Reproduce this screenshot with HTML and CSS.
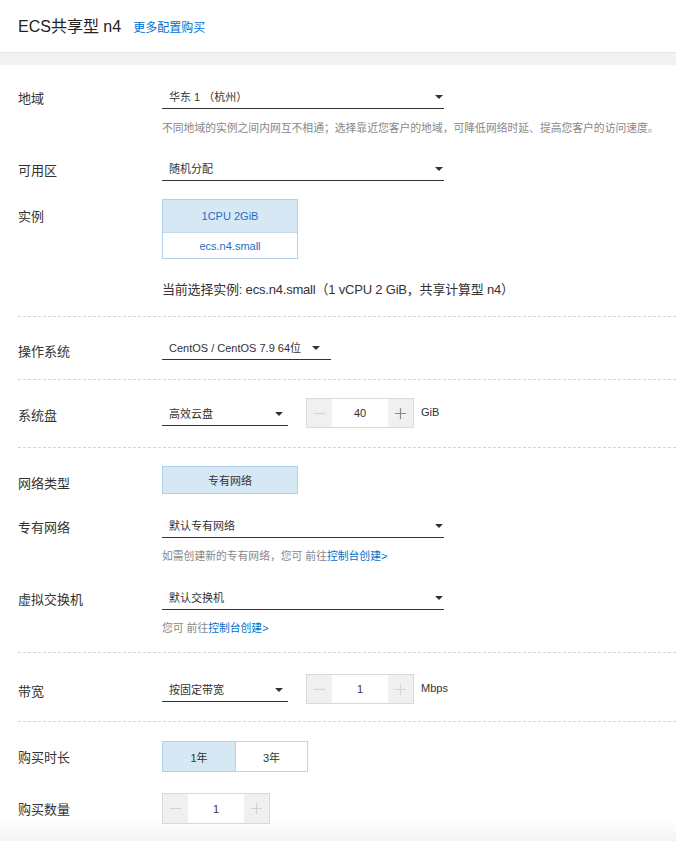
FILE: index.html
```html
<!DOCTYPE html>
<html lang="zh-CN">
<head>
<meta charset="utf-8">
<title>ECS共享型 n4</title>
<link rel="stylesheet" href="styles.css">
</head>
<body>
<header class="topbar">
  <h1 class="title">ECS共享型 n4</h1>
  <a class="more" href="#">更多配置购买</a>
</header>
<div class="band"></div>
<main class="form">
  <section class="group g1">
    <div class="field">
      <div class="label">地域</div>
      <div class="control">
        <div class="select wide"><span>华东 1 （杭州）</span><i class="caret"></i></div>
        <p class="hint h-first">不同地域的实例之间内网互不相通；选择靠近您客户的地域，可降低网络时延、提高您客户的访问速度。</p>
      </div>
    </div>
    <div class="field f-zone">
      <div class="label">可用区</div>
      <div class="control">
        <div class="select wide"><span>随机分配</span><i class="caret"></i></div>
      </div>
    </div>
    <div class="field f-inst">
      <div class="label">实例</div>
      <div class="control">
        <div class="card">
          <div class="card-spec">1CPU 2GiB</div>
          <div class="card-name">ecs.n4.small</div>
        </div>
        <p class="current">当前选择实例: ecs.n4.small（1 vCPU 2 GiB，共享计算型 n4）</p>
      </div>
    </div>
  </section>

  <section class="group g2">
    <div class="field">
      <div class="label label-os">操作系统</div>
      <div class="control">
        <div class="select os"><span>CentOS / CentOS 7.9 64位</span><i class="caret"></i></div>
      </div>
    </div>
  </section>

  <section class="group g3">
    <div class="field">
      <div class="label">系统盘</div>
      <div class="control inline">
        <div class="select narrow"><span>高效云盘</span><i class="caret"></i></div>
        <div class="stepper">
          <span class="step"><svg width="11" height="11" viewBox="0 0 11 11"><path d="M0 5.5H11" stroke="#d4d4d4" stroke-width="1.2"/></svg></span>
          <span class="val">40</span>
          <span class="step"><svg width="11" height="11" viewBox="0 0 11 11"><path d="M0 5.5H11M5.5 0V11" stroke="#8c8c8c" stroke-width="1.2"/></svg></span>
        </div>
        <span class="unit">GiB</span>
      </div>
    </div>
  </section>

  <section class="group g4">
    <div class="field">
      <div class="label">网络类型</div>
      <div class="control">
        <div class="chip">专有网络</div>
      </div>
    </div>
    <div class="field f-vpc">
      <div class="label">专有网络</div>
      <div class="control">
        <div class="select wide"><span>默认专有网络</span><i class="caret"></i></div>
        <p class="hint">如需创建新的专有网络，您可 前往<a href="#">控制台创建&gt;</a></p>
      </div>
    </div>
    <div class="field f-vsw">
      <div class="label">虚拟交换机</div>
      <div class="control">
        <div class="select wide"><span>默认交换机</span><i class="caret"></i></div>
        <p class="hint">您可 前往<a href="#">控制台创建&gt;</a></p>
      </div>
    </div>
  </section>

  <section class="group g5">
    <div class="field">
      <div class="label">带宽</div>
      <div class="control inline">
        <div class="select narrow"><span>按固定带宽</span><i class="caret"></i></div>
        <div class="stepper">
          <span class="step"><svg width="11" height="11" viewBox="0 0 11 11"><path d="M0 5.5H11" stroke="#d4d4d4" stroke-width="1.2"/></svg></span>
          <span class="val">1</span>
          <span class="step"><svg width="11" height="11" viewBox="0 0 11 11"><path d="M0 5.5H11M5.5 0V11" stroke="#d4d4d4" stroke-width="1.2"/></svg></span>
        </div>
        <span class="unit">Mbps</span>
      </div>
    </div>
  </section>

  <section class="group g6">
    <div class="field">
      <div class="label label-buy">购买时长</div>
      <div class="control">
        <div class="seg">
          <span class="seg-item active">1年</span>
          <span class="seg-item">3年</span>
        </div>
      </div>
    </div>
    <div class="field f-qty">
      <div class="label label-buy">购买数量</div>
      <div class="control">
        <div class="stepper qty">
          <span class="step"><svg width="11" height="11" viewBox="0 0 11 11"><path d="M0 5.5H11" stroke="#d4d4d4" stroke-width="1.2"/></svg></span>
          <span class="val">1</span>
          <span class="step"><svg width="11" height="11" viewBox="0 0 11 11"><path d="M0 5.5H11M5.5 0V11" stroke="#d4d4d4" stroke-width="1.2"/></svg></span>
        </div>
      </div>
    </div>
  </section>
</main>
</body>
</html>
```

FILE: styles.css
```css
* { box-sizing: border-box; }

html, body {
  margin: 0;
  padding: 0;
  background: #fff;
}

body {
  font-family: "Liberation Sans", Arial, "Noto Sans CJK SC", sans-serif;
  color: #333;
  width: 676px;
  overflow: hidden;
}

body::after {
  content: "";
  position: fixed;
  left: 0;
  right: 0;
  bottom: 0;
  height: 22px;
  background: linear-gradient(rgba(0, 0, 0, 0), rgba(0, 0, 0, 0.045));
  pointer-events: none;
}

a { text-decoration: none; color: #0070cc; }

.topbar {
  height: 53px;
  border-bottom: 1px solid #e4e5e7;
  display: flex;
  align-items: center;
  padding: 0 0 0 18px;
}

.title {
  margin: 0;
  font-size: 16px;
  font-weight: normal;
  color: #222;
  line-height: 20px;
  margin-top: 2px;
}

.more {
  margin-left: 12px;
  font-size: 12px;
  line-height: 20px;
  margin-top: 3px;
}

.band {
  height: 12px;
  background: #f1f2f4;
}

.group {
  margin-left: 18px;
  border-bottom: 1px dashed #d6d6d6;
}

.g1 { padding: 16px 0 16px; }
.g2 { padding: 15px 0 17px; }
.g3 { padding: 18px 0 19px; }
.g4 { padding: 18px 0 16px; }
.g5 { padding: 21px 0 17px; }
.g6 { padding: 19px 0 20px; border-bottom: none; }

.field {
  display: flex;
  align-items: flex-start;
}

.f-zone { margin-top: 17px; }
.f-inst { margin-top: 18px; }
.f-vpc { margin-top: 16px; }
.f-vsw { margin-top: 18px; }
.f-qty { margin-top: 21px; }

.label {
  width: 144px;
  flex: none;
  margin-top: 8px;
  font-size: 13px;
  line-height: 20px;
  color: #333;
}

.label-os { margin-top: 10px; }
.label-buy { margin-top: 7px; }

.control {
  display: flex;
  flex-direction: column;
  align-items: flex-start;
}

.control.inline {
  flex-direction: row;
}

.select {
  height: 28px;
  padding: 3px 1px 0 7px;
  border-bottom: 1px solid #333;
  display: flex;
  align-items: center;
  justify-content: space-between;
  font-size: 11px;
  color: #333;
}

.select.wide { width: 282px; }
.select.narrow { width: 126px; padding-right: 5px; }
.select.os { width: 169px; padding-right: 11px; }

.caret {
  width: 0;
  height: 0;
  border-left: 4px solid transparent;
  border-right: 4px solid transparent;
  border-top: 4px solid #333;
  margin-top: 1px;
}

.hint {
  margin: 10px 0 0;
  font-size: 10.8px;
  line-height: 16px;
  color: #888;
  white-space: nowrap;
}

.hint.h-first { margin-top: 11px; }

.card {
  width: 136px;
  border: 1px solid #add1ee;
  display: flex;
  flex-direction: column;
}

.card-spec {
  height: 33px;
  background: #d7e8f5;
  border-bottom: 1px solid #c5d9e8;
  display: flex;
  align-items: center;
  justify-content: center;
  font-size: 11px;
  color: #1e6fc4;
}

.card-name {
  height: 25px;
  display: flex;
  align-items: center;
  justify-content: center;
  font-size: 11px;
  color: #1e6fc4;
}

.current {
  margin: 21px 0 0;
  font-size: 13px;
  line-height: 20px;
  color: #333;
  letter-spacing: -0.2px;
  white-space: nowrap;
}

.chip {
  width: 136px;
  height: 28px;
  background: #d7e8f5;
  border: 1px solid #add1ee;
  display: flex;
  align-items: center;
  justify-content: center;
  font-size: 11px;
  color: #333;
}

.stepper {
  margin-left: 18px;
  width: 108px;
  height: 30px;
  border: 1px solid #d9d9d9;
  display: flex;
}

.stepper.qty {
  margin-left: 0;
  height: 31px;
}

.step {
  width: 25px;
  flex: none;
  background: #f0f0f0;
  display: flex;
  align-items: center;
  justify-content: center;
}

.step svg { display: block; }

.val {
  flex: 1;
  display: flex;
  align-items: center;
  justify-content: center;
  font-size: 11px;
  color: #333;
}

.unit {
  margin-left: 7px;
  font-size: 11px;
  line-height: 28px;
  color: #333;
}

.seg {
  display: flex;
}

.seg-item {
  width: 73px;
  height: 31px;
  border: 1px solid #d0d0d0;
  display: flex;
  align-items: center;
  justify-content: center;
  font-size: 11px;
  color: #333;
  background: #fff;
}

.seg-item + .seg-item { margin-left: -1px; }

.seg-item.active {
  width: 74px;
  background: #d7e8f5;
  border-color: #add1ee;
  position: relative;
  z-index: 1;
}
```
